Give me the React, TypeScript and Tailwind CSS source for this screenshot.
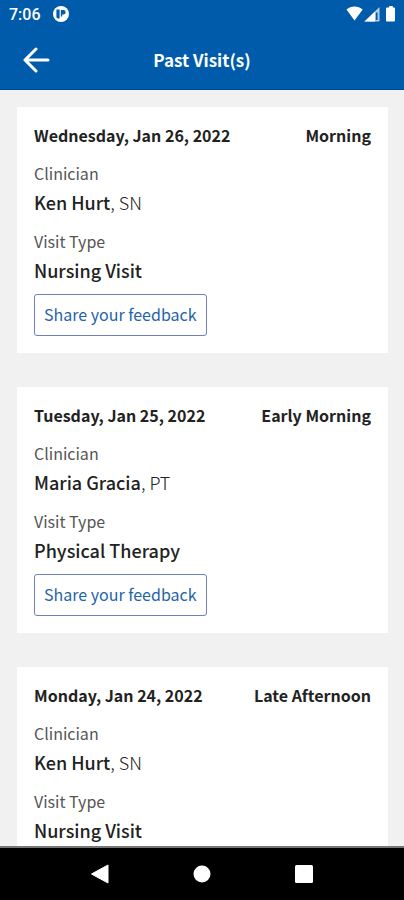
type Visit = {
  date: string;
  time: string;
  clinician: string;
  title: string;
  kind: string;
};

const visits: Visit[] = [
  { date: "Wednesday, Jan 26, 2022", time: "Morning", clinician: "Ken Hurt", title: "SN", kind: "Nursing Visit" },
  { date: "Tuesday, Jan 25, 2022", time: "Early Morning", clinician: "Maria Gracia", title: "PT", kind: "Physical Therapy" },
  { date: "Monday, Jan 24, 2022", time: "Late Afternoon", clinician: "Ken Hurt", title: "SN", kind: "Nursing Visit" },
];

function StatusBar() {
  return (
    <div className="flex h-7 items-center justify-between pr-2 pl-[9px] text-white">
      <div className="flex items-center gap-3">
        <span className="pt-px font-['Roboto',sans-serif] text-base font-medium">7:06</span>
        <svg viewBox="0 0 16 16" className="size-4" aria-hidden="true">
          <circle cx="8" cy="8" r="8" fill="#fff" />
          <path d="M3.4 3.400h3.200v9.200H5.200a1.800 1.800 0 0 1-1.800-1.800z" fill="#005cab" />
          <path d="M7.800 4h2.600a2.200 2.200 0 0 1 0 4.400H9.200v2H7.800z" fill="#005cab" />
        </svg>
      </div>
      <svg viewBox="0 0 50 16" className="h-4 w-[50px]" aria-hidden="true">
        <path d="M.5 3.6C2.800 1.400 5.600.4 8.500.4s5.900 1 8.200 3.200L8.500 14.500z" fill="#fff" />
        <path d="M33.500 1v14.500H18.500z" fill="#fff" fillOpacity=".7" />
        <path d="M29 5.400V15.500H18.500z" fill="#fff" />
        <path d="M29.800 6.500h1.800v7.500h-1.800z" fill="#005cab" />
        <path d="M43.200 0h3.600v1.500H48q1 0 1 1v12q0 1-1 1h-7q-1 0-1-1v-12q0-1 1-1h2.200z" fill="#fff" />
      </svg>
    </div>
  );
}

function VisitCard({ visit }: { visit: Visit }) {
  return (
    <article className="shrink-0 bg-white px-[17px] pt-4 pb-[17px] text-[#222]">
      <div className="flex justify-between text-base leading-6 font-bold">
        <h2>{visit.date}</h2>
        <span>{visit.time}</span>
      </div>
      <dl>
        <dt className="mt-3.5 text-base leading-6 text-[#555]">Clinician</dt>
        <dd className="mt-[5px] text-lg leading-6">
          <span className="font-medium">{visit.clinician}</span>
          <span className="font-light">, {visit.title}</span>
        </dd>
        <dt className="mt-[15px] text-base leading-6 text-[#555]">Visit Type</dt>
        <dd className="mt-[5px] text-lg leading-6 font-medium">{visit.kind}</dd>
      </dl>
      <button
        type="button"
        className="mt-3 block h-[42px] rounded-[3px] border border-[#6f80bd] px-[9px] pb-0.5 text-base leading-6 text-[#2563a8]"
      >
        Share your feedback
      </button>
    </article>
  );
}

export default function App() {
  return (
    <div className="flex h-screen flex-col overflow-hidden bg-[#f1f1f1] font-['Noto_Sans_CJK_SC','Noto_Sans',sans-serif]">
      <header className="shrink-0 border-b border-[#0048a0] bg-[#005cab] text-white">
        <StatusBar />
        <div className="grid h-[61px] grid-cols-[1fr_auto_1fr] items-center px-[22px] pt-0.5">
          <button type="button" aria-label="Back" className="block w-7">
            <svg viewBox="0 0 28 26" className="h-[26px] w-7" fill="none" stroke="#fff" strokeWidth="3" strokeLinecap="round" strokeLinejoin="round">
              <path d="M26 13H3M14 2 3 13l11 11" />
            </svg>
          </button>
          <h1 className="text-[17px] leading-6 font-bold">Past Visit(s)</h1>
          <span />
        </div>
      </header>
      <main className="flex min-h-0 flex-1 flex-col gap-[34px] overflow-y-auto pt-[17px] pr-4 pb-[17px] pl-[17px] [scrollbar-width:none]">
        {visits.map((visit) => (
          <VisitCard key={visit.date} visit={visit} />
        ))}
      </main>
      <nav className="flex h-[54px] shrink-0 items-center justify-center gap-[82px] border-t-2 border-[#777] bg-black">
        <button type="button" aria-label="System back">
          <svg viewBox="0 0 20 20" className="size-5">
            <path d="M1.500 10 18 1v18z" fill="#fff" stroke="#fff" strokeLinejoin="round" />
          </svg>
        </button>
        <button type="button" aria-label="Home">
          <svg viewBox="0 0 20 20" className="size-5">
            <circle cx="10" cy="10" r="8.500" fill="#fff" />
          </svg>
        </button>
        <button type="button" aria-label="Recent apps">
          <svg viewBox="0 0 20 20" className="size-5">
            <rect x="1" y="1" width="18" height="18" rx="1.500" fill="#fff" />
          </svg>
        </button>
      </nav>
    </div>
  );
}
